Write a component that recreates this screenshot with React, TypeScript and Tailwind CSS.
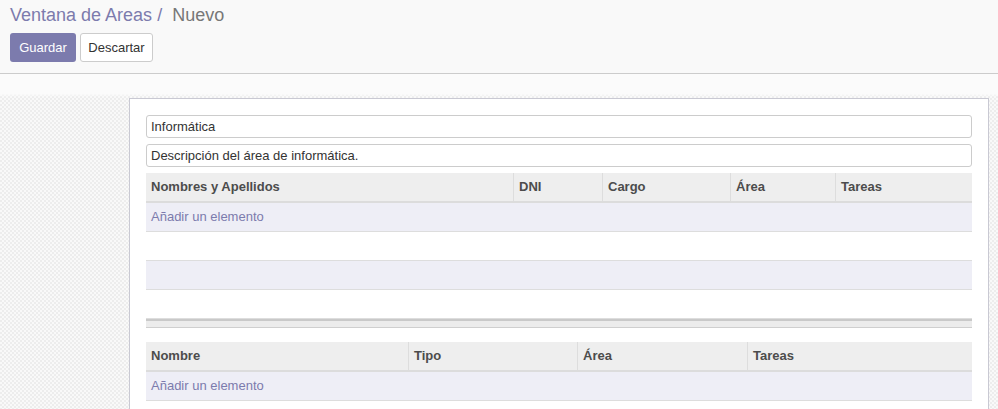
import React from "react";

const font = { fontFamily: '"Liberation Sans", Arial, sans-serif' };

type Col = { label: string; w?: number };

function Table({ cols, rows }: { cols: Col[]; rows: number }) {
  return (
    <div className="w-full">
      <div className="flex h-[30px] bg-[#eeeeee] border-b-2 border-[#dcdcdc]">
        {cols.map((c, i) => (
          <div
            key={c.label}
            className={`flex items-center px-[5px] text-[13px] font-bold text-[#4c4c4c] ${i > 0 ? "border-l border-[#dddddd]" : ""} ${c.w ? "shrink-0" : "flex-1"}`}
            style={c.w ? { width: c.w } : undefined}
          >
            {c.label}
          </div>
        ))}
      </div>
      {Array.from({ length: rows }).map((_, i) => (
        <div
          key={i}
          className={`flex items-center h-[29px] border-b border-[#dddddd] px-[5px] text-[13px] text-[#7c7bad] ${i % 2 === 0 ? "bg-[#eeeef6]" : "bg-white"}`}
        >
          {i === 0 ? "Añadir un elemento" : ""}
        </div>
      ))}
    </div>
  );
}

export default function App() {
  return (
    <div className="w-[998px] h-[409px] overflow-hidden bg-white" style={font}>
      <div className="bg-[#f9f9f9] border-b border-[#cccccc] px-[10px] pt-[4px] pb-[11px]">
        <div className="text-[18px] leading-[22px] whitespace-nowrap">
          <span className="text-[#7c7bad]">Ventana de Areas</span>
          <span className="text-[#7c7bad]"> / </span>
          <span className="text-[#777777] ml-[5px]">Nuevo</span>
        </div>
        <div className="flex gap-[4px] mt-[7px]">
          <button className="h-[29px] w-[66px] rounded-[3px] bg-[#7c7bad] text-white text-[13px]">
            Guardar
          </button>
          <button className="h-[29px] w-[73px] rounded-[3px] bg-white border border-[#cccccc] text-[#333333] text-[13px]">
            Descartar
          </button>
        </div>
      </div>
      <div className="relative h-[335px] bg-[repeating-conic-gradient(#ededed_0_25%,#f9f9f9_0_50%)] bg-[length:4px_4px]">
        <div className="absolute left-0 right-0 top-0 h-[23px] bg-[linear-gradient(#fbfbfb_85%,rgba(251,251,251,0))]" />
        <div className="relative pt-[24px]">
          <div className="ml-[129px] w-[860px] bg-white border border-[#c9c9d3] px-[16px] pt-[16px] pb-[40px]">
            <div className="h-[23px] border border-[#cccccc] rounded-[3px] px-[4px] flex items-center text-[13px] text-[#333333]">
              Informática
            </div>
            <div className="h-[23px] mt-[6px] border border-[#cccccc] rounded-[3px] px-[4px] flex items-center text-[13px] text-[#333333]">
              Descripción del área de informática.
            </div>
            <div className="mt-[6px]">
              <Table
                cols={[
                  { label: "Nombres y Apellidos", w: 367 },
                  { label: "DNI", w: 89 },
                  { label: "Cargo", w: 128 },
                  { label: "Área", w: 105 },
                  { label: "Tareas" },
                ]}
                rows={4}
              />
              <div className="h-[9px] border-t-2 border-b border-t-[#c9c9c9] border-b-[#cfcfcf] bg-[#ececec]" />
            </div>
            <div className="mt-[14px]">
              <Table
                cols={[
                  { label: "Nombre", w: 262 },
                  { label: "Tipo", w: 169 },
                  { label: "Área", w: 170 },
                  { label: "Tareas" },
                ]}
                rows={1}
              />
            </div>
          </div>
        </div>
      </div>
    </div>
  );
}
